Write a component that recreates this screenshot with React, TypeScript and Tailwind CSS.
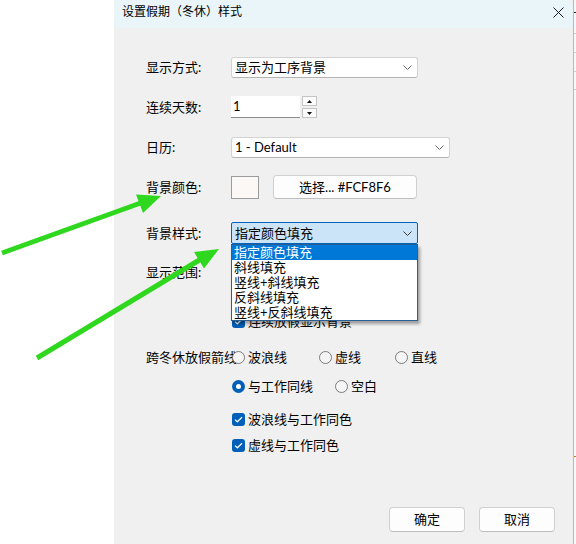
import React from "react";

const FONT = "font-['Lato','Noto_Sans_CJK_SC',sans-serif]";

function Chevron({ color = "#6a6a6a" }: { color?: string }) {
  return (
    <svg width="9" height="5" viewBox="0 0 9 5" className="shrink-0">
      <path d="M0.5 0.5L4.5 4.5L8.5 0.5" fill="none" stroke={color} strokeWidth="1" />
    </svg>
  );
}

function Select({ w, text }: { w: string; text: string }) {
  return (
    <div
      className={`${w} h-[21px] bg-white border border-[#d2d2d2] border-b-[#b4b4b4] rounded-[3px] flex items-center justify-between pl-[3px] pr-[5px]`}
    >
      <span className="leading-none">{text}</span>
      <Chevron />
    </div>
  );
}

function Radio({ checked }: { checked?: boolean }) {
  if (checked) {
    return (
      <div className="relative w-[13px] h-[13px] rounded-full bg-[#005fb8] flex items-center justify-center shrink-0">
        <div className="w-[5px] h-[5px] rounded-full bg-white" />
      </div>
    );
  }
  return <div className="relative w-[13px] h-[13px] rounded-full border border-[#7b7b7b] bg-[#f5f5f5] shrink-0" />;
}

function Check() {
  return (
    <div className="w-[13px] h-[13px] rounded-[3px] bg-[#005fb8] flex items-center justify-center shrink-0">
      <svg width="9" height="7" viewBox="0 0 9 7">
        <path d="M1 3.6L3.3 5.8L8 1.2" fill="none" stroke="white" strokeWidth="1.2" />
      </svg>
    </div>
  );
}

function Label({ text }: { text: string }) {
  return <div className="w-[85px] shrink-0 whitespace-nowrap leading-none">{text}</div>;
}

export default function App() {
  const items = ["指定颜色填充", "斜线填充", "竖线+斜线填充", "反斜线填充", "竖线+反斜线填充"];
  return (
    <div className={`relative flex w-[576px] h-[544px] bg-white overflow-hidden text-[13px] text-black ${FONT}`}>
      <div className="w-[114px] shrink-0 bg-white" />
      <div className="w-[459px] shrink-0 flex flex-col bg-[#f0f0f0]">
        {/* title bar */}
        <div className="h-[28px] shrink-0 bg-[#e9f5f9] flex items-center justify-between pl-[8px] pr-[9px] pb-[4px] rounded-tr-[6px]">
          <span className="text-[12px] leading-none">设置假期（冬休）样式</span>
          <svg width="11" height="11" viewBox="0 0 11 11">
            <path d="M0.5 0.5L10.5 10.5M10.5 0.5L0.5 10.5" stroke="#1a1a1a" strokeWidth="1" />
          </svg>
        </div>

        {/* body */}
        <div className="flex flex-col pl-[32px] pr-[18px]">
          <div className="mt-[29px] h-[21px] flex items-center">
            <Label text="显示方式:" />
            <Select w="w-[187px]" text="显示为工序背景" />
          </div>

          <div className="mt-[18px] h-[22px] flex items-center">
            <Label text="连续天数:" />
            <div className="w-[69px] h-[22px] bg-white border-b border-[#8c8c8c] flex items-center pl-[2px]">
              <span className="leading-none">1</span>
            </div>
            <div className="ml-[2px] w-[15px] h-[22px] flex flex-col justify-between">
              <div className="h-[10px] bg-[#fbfbfb] border border-[#c4c4c4] flex items-center justify-center">
                <svg width="5" height="3" viewBox="0 0 5 3">
                  <path d="M2.5 0L5 3H0Z" fill="#111" />
                </svg>
              </div>
              <div className="h-[10px] bg-[#fbfbfb] border border-[#c4c4c4] flex items-center justify-center">
                <svg width="5" height="3" viewBox="0 0 5 3">
                  <path d="M0 0H5L2.5 3Z" fill="#111" />
                </svg>
              </div>
            </div>
          </div>

          <div className="mt-[19px] h-[21px] flex items-center">
            <Label text="日历:" />
            <Select w="w-[219px]" text="1 - Default" />
          </div>

          <div className="mt-[17px] h-[24px] flex items-center">
            <Label text="背景颜色:" />
            <div className="w-[28px] h-[23px] bg-[#fcf8f6] border border-[#9c9c9c]" />
            <div className="ml-[14px] w-[144px] h-[24px] bg-[#fdfdfd] border border-[#d0d0d0] border-b-[#bdbdbd] rounded-[4px] flex items-center justify-center">
              <span className="leading-none">选择... #FCF8F6</span>
            </div>
          </div>

          <div className="mt-[23px] h-[22px] flex items-center relative z-20">
            <Label text="背景样式:" />
            <div className="relative">
              <div className="w-[187px] h-[22px] bg-[#cce4f7] border border-[#0062b8] rounded-[2px] flex items-center justify-between pl-[3px] pr-[5px]">
                <span className="leading-none">指定颜色填充</span>
                <Chevron color="#3a3a3a" />
              </div>
              <div className="absolute top-[22px] left-0 w-[187px] bg-white border border-[#2a5f96] shadow-[2px_3px_3px_rgba(0,0,0,0.35)] flex flex-col">
                {items.map((t, i) => (
                  <div
                    key={t}
                    className={
                      i === 0
                        ? "h-[15px] flex items-center pl-[2px] bg-[#0078d7] text-white"
                        : "h-[15px] flex items-center pl-[2px]"
                    }
                  >
                    <span className="leading-none">{t}</span>
                  </div>
                ))}
              </div>
            </div>
          </div>

          <div className="mt-[18px] h-[20px] flex items-center">
            <Label text="显示范围:" />
          </div>

          <div className="mt-[31px] h-[16px] flex items-center">
            <div className="w-[85px] shrink-0" />
            <div className="ml-[1px] flex items-center gap-[3px]">
              <Check />
              <span className="leading-none">连续放假显示背景</span>
            </div>
          </div>

          <div className="mt-[20px] h-[17px] flex items-center">
            <Label text="跨冬休放假箭线:" />
            <div className="ml-[1px] flex items-center">
              <div className="w-[87px] flex items-center gap-[3px]">
                <Radio />
                <span className="leading-none">波浪线</span>
              </div>
              <div className="w-[76px] flex items-center gap-[3px]">
                <Radio />
                <span className="leading-none">虚线</span>
              </div>
              <div className="flex items-center gap-[3px]">
                <Radio />
                <span className="leading-none">直线</span>
              </div>
            </div>
          </div>

          <div className="mt-[12px] h-[17px] flex items-center">
            <div className="w-[85px] shrink-0" />
            <div className="ml-[1px] flex items-center">
              <div className="w-[103px] flex items-center gap-[3px]">
                <Radio checked />
                <span className="leading-none">与工作同线</span>
              </div>
              <div className="flex items-center gap-[3px]">
                <Radio />
                <span className="leading-none">空白</span>
              </div>
            </div>
          </div>

          <div className="mt-[16px] h-[16px] flex items-center">
            <div className="w-[85px] shrink-0" />
            <div className="ml-[1px] flex items-center gap-[3px]">
              <Check />
              <span className="leading-none">波浪线与工作同色</span>
            </div>
          </div>

          <div className="mt-[10px] h-[16px] flex items-center">
            <div className="w-[85px] shrink-0" />
            <div className="ml-[1px] flex items-center gap-[3px]">
              <Check />
              <span className="leading-none">虚线与工作同色</span>
            </div>
          </div>

          <div className="mt-[54px] flex justify-end gap-[14px]">
            <div className="w-[76px] h-[25px] bg-[#fdfdfd] border border-[#d0d0d0] border-b-[#bdbdbd] rounded-[4px] flex items-center justify-center">
              <span className="leading-none">确定</span>
            </div>
            <div className="w-[76px] h-[25px] bg-[#fdfdfd] border border-[#d0d0d0] border-b-[#bdbdbd] rounded-[4px] flex items-center justify-center">
              <span className="leading-none">取消</span>
            </div>
          </div>
        </div>
      </div>

      {/* right edge strip */}
      <div className="w-[3px] shrink-0 border-l border-[#b9b9b9] bg-[#f8f8f8] flex flex-col">
        <div className="mt-[12px] h-[1px] bg-[#222]" />
        <div className="mt-[20px] h-[1px] bg-[#cfcfcf]" />
        <div className="mt-[18px] h-[1px] bg-[#cfcfcf]" />
        <div className="mt-[18px] h-[1px] bg-[#cfcfcf]" />
        <div className="mt-[17px] h-[1px] bg-[#cfcfcf]" />
        <div className="mt-[366px] h-[1px] bg-[#c87a2a]" />
      </div>

      {/* annotation arrows */}
      <svg className="absolute inset-0 pointer-events-none z-50" width="576" height="544" viewBox="0 0 576 544">
        <line x1="2" y1="253" x2="142" y2="202.5" stroke="#2fd81f" strokeWidth="5" />
        <polygon points="161,196 136,194.5 143,213" fill="#2fd81f" />
        <line x1="37" y1="358" x2="201" y2="259" stroke="#2fd81f" strokeWidth="5" />
        <polygon points="219,249 194,252 204,268.5" fill="#2fd81f" />
      </svg>
    </div>
  );
}
